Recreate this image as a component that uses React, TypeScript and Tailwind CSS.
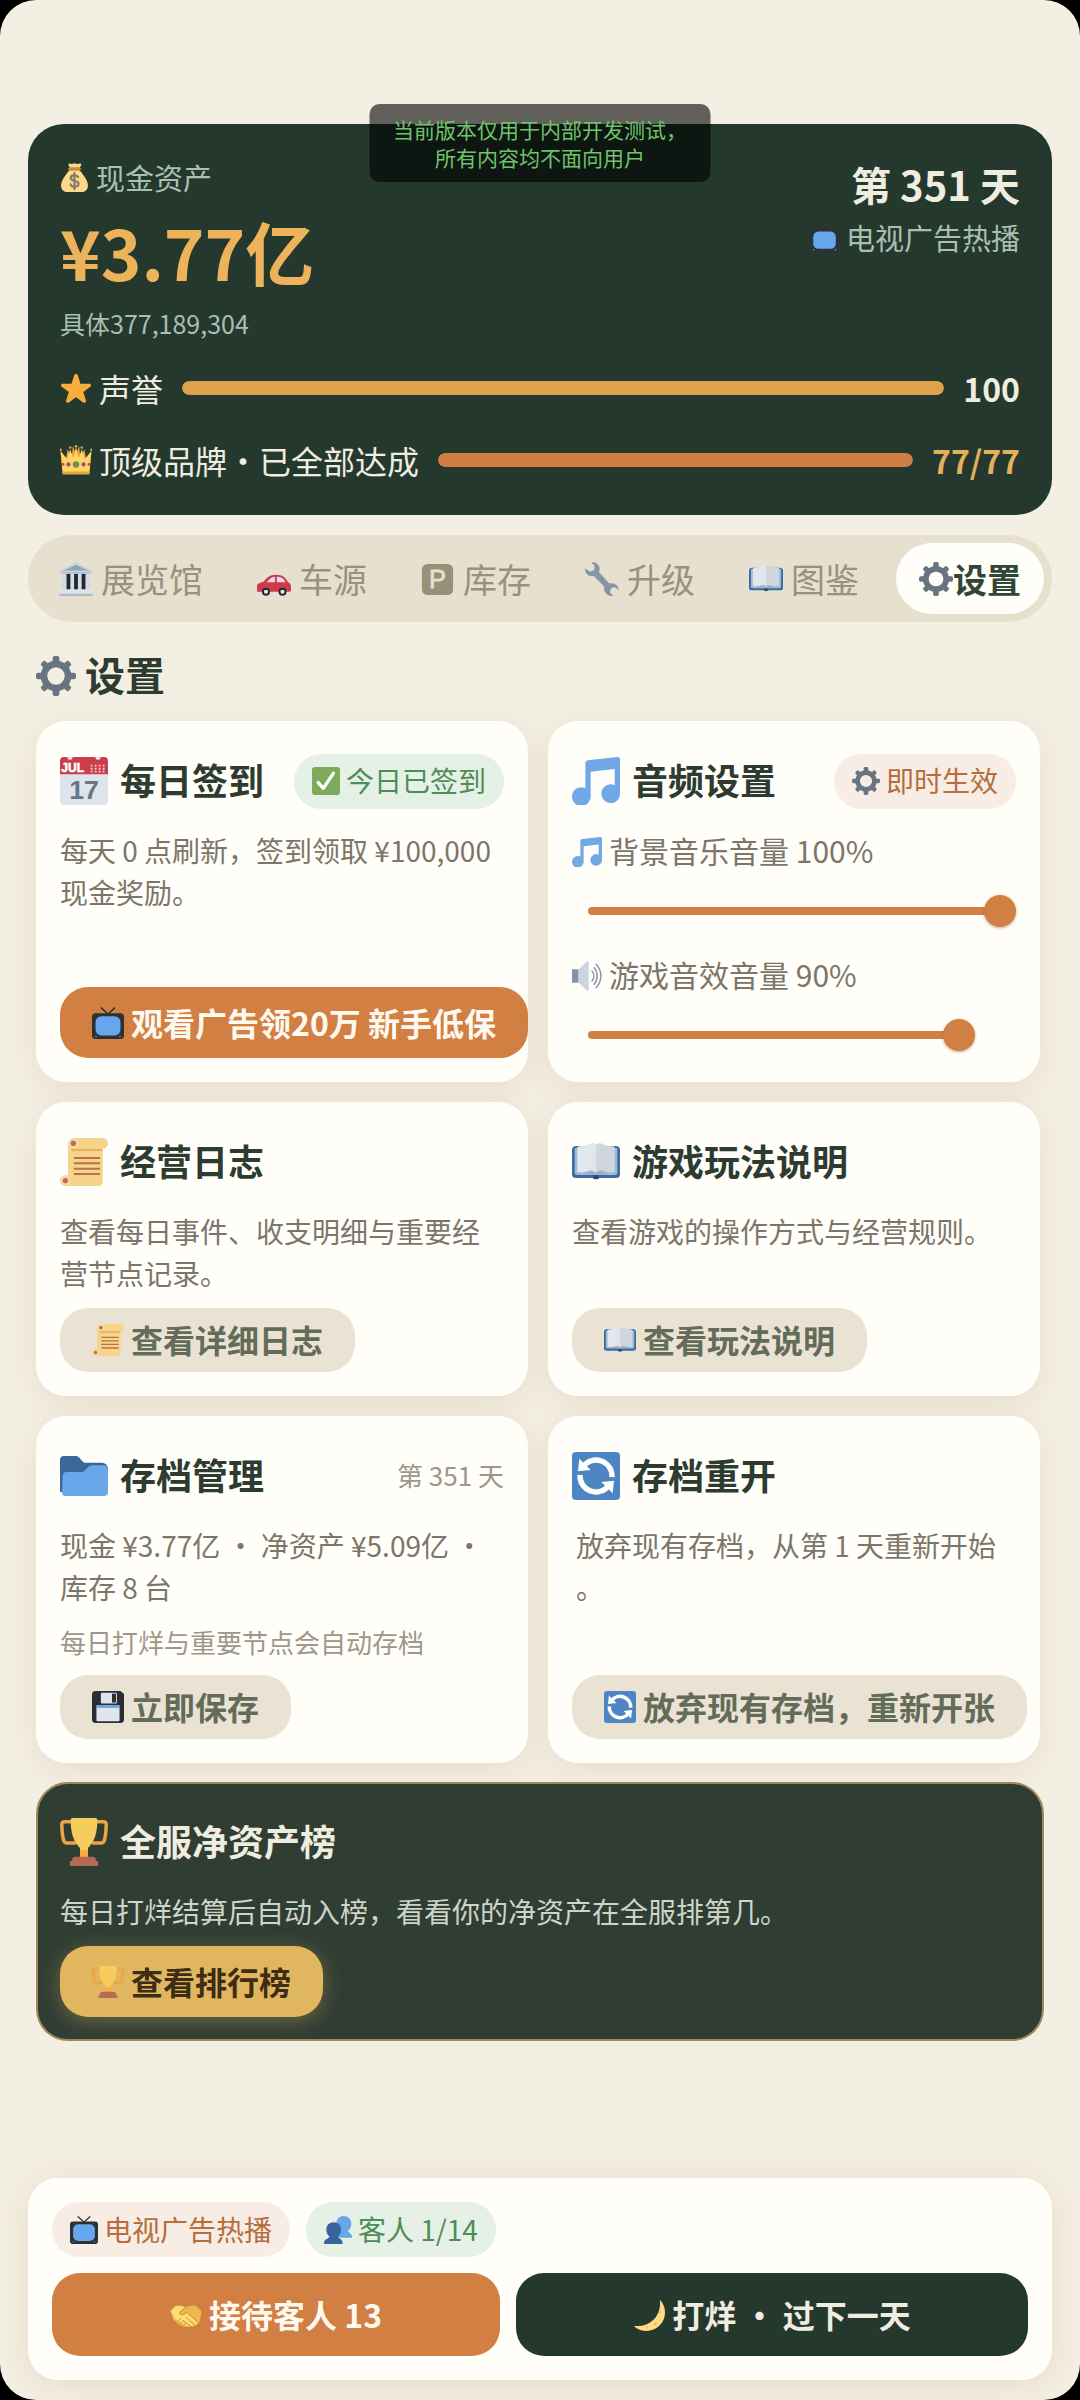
import { useState } from "react";
import type { ReactNode } from "react";
import clsx from "clsx";

interface IconProps {
  className?: string;
}

function Svg({ className, children }: { className?: string; children: ReactNode }) {
  return (
    <svg viewBox="0 0 36 36" className={clsx("block shrink-0", className)} aria-hidden="true">
      {children}
    </svg>
  );
}

function MoneyBagIcon({ className }: IconProps) {
  return (
    <Svg className={className}>
      <path
        fill="#FDD888"
        d="M12 9c-3 3-9 10-10.500 17C.500 32 4 36 9 36h18c5 0 8.500-4 7.500-10C33 19 27 12 24 9z"
      />
      <path fill="#FDD888" d="M11 1c2-1 3 1 4.500 0s3.500-1 5 0S24 0 26 1c1.500.700-.500 3-1.500 5h-12C11.500 4 9.500 1.800 11 1z" />
      <rect x="10" y="5.500" width="16" height="3.500" rx="1.700" fill="#D2893F" />
      <path
        fill="none"
        stroke="#7C7A6C"
        strokeWidth="2.600"
        strokeLinecap="round"
        d="M22.500 17.500c-1-1.800-2.600-2.500-4.600-2.500-2.600 0-4.500 1.300-4.500 3.500 0 5.200 9.600 2 9.600 7.300 0 2.300-2 3.700-4.900 3.700-2.300 0-4.200-1-5-3M18 12.500v20"
      />
    </Svg>
  );
}

function StarIcon({ className }: IconProps) {
  return (
    <Svg className={className}>
      <path
        fill="#F8AD3D"
        d="M27.300 34.600c-.4 0-.8-.1-1.200-.4L18 28.400l-8.100 5.800c-.7.500-1.600.5-2.300 0-.7-.5-1-1.400-.7-2.200l3-9.600-8-5.800c-.7-.5-1-1.400-.8-2.200.3-.8 1-1.300 1.900-1.300h9.900l3.200-9.600c.3-.8 1-1.300 1.900-1.300s1.600.5 1.900 1.300l3.100 9.600h10c.8 0 1.600.5 1.900 1.300.2.800 0 1.700-.8 2.200l-7.900 5.800 3 9.600c.3.800 0 1.700-.7 2.200-.4.300-.8.400-1.200.4z"
      />
    </Svg>
  );
}

function CrownIcon({ className }: IconProps) {
  return (
    <Svg className={className}>
      <path fill="#E9A13B" d="M6 20 8.500 6 13 15l1.500-13 3.500 10 3.500-10L23 15l4.500-9L30 20z" />
      <path fill="#FFD469" d="M3 34 .500 7.500 8 17l3.500-11L15 16l3-13 3 13 3.500-10L28 17l7.500-9.500L33 34z" />
      <path fill="#E9A13B" d="M2.800 31h30.400l-.3 3H3.100z" />
      <circle cx=".9" cy="6.500" r="1.300" fill="#E9A13B" />
      <circle cx="11.500" cy="4" r="1.400" fill="#E9A13B" />
      <circle cx="18" cy="2.500" r="1.500" fill="#E9A13B" />
      <circle cx="24.500" cy="4" r="1.400" fill="#E9A13B" />
      <circle cx="35.100" cy="6.500" r="1.300" fill="#E9A13B" />
      <circle cx="18" cy="23" r="3.600" fill="#6C9444" />
      <circle cx="9.500" cy="23" r="2.400" fill="#9C4692" />
      <circle cx="26.500" cy="23" r="2.400" fill="#9C4692" />
      <circle cx="3.500" cy="23" r="1.500" fill="#C9433F" />
      <circle cx="32.500" cy="23" r="1.500" fill="#C9433F" />
    </Svg>
  );
}

function TvIcon({ className }: IconProps) {
  return (
    <Svg className={className}>
      <path stroke="#2C3136" strokeWidth="1.600" strokeLinecap="round" d="M10.500 1 18 8l7.500-7" fill="none" />
      <rect y="7" width="36" height="29" rx="4" fill="#2C3136" />
      <rect x="4" y="10.500" width="28" height="21.500" rx="6.500" fill="#67A6EC" />
      <circle cx="4.500" cy="33.200" r="1.200" fill="#66757F" />
      <circle cx="31.500" cy="33.200" r="1.200" fill="#66757F" />
    </Svg>
  );
}

function MuseumIcon({ className }: IconProps) {
  return (
    <Svg className={className}>
      <path fill="#C9D4DE" d="M18 0 36 9.500V11H0V9.500z" />
      <path fill="#8FA3B5" d="M18 3 31 9H5z" />
      <rect x="3" y="11" width="30" height="19" fill="#D3DCE5" />
      <path fill="#1F2733" d="M8 12.500h4V29H8zM16 12.500h4V29h-4zM24 12.500h4V29h-4z" />
      <rect x="3" y="10.500" width="30" height="2" fill="#B3C2CF" />
      <path fill="#DDE3E9" d="M3 29h30c2 1 3 3 3 5H0c0-2 1-4 3-5z" />
      <rect y="33.500" width="36" height="2.500" rx="1" fill="#AEBBC8" />
    </Svg>
  );
}

function CarIcon({ className }: IconProps) {
  return (
    <Svg className={className}>
      <path
        fill="#CF3A4A"
        d="M0 31v-5c0-3 2.500-4 7-5 3-4.500 7-7.500 13-7.500 7 0 10.500 3 12.500 7.500 2.500 1 3.500 3 3.500 6v3c0 1-.5 1.500-1.500 1.500H1.500C.5 31.500 0 31.500 0 31z"
      />
      <path fill="#E6DDEB" d="M10.500 21.500c2-3.500 5-5.700 8.500-6v6zM21 15.500c5 0 7.700 2.300 9 6h-9z" />
      <circle cx="9.500" cy="31.500" r="4.300" fill="#24292D" />
      <circle cx="9.500" cy="31.500" r="2.200" fill="#E7ECEF" />
      <circle cx="27" cy="31.500" r="4.300" fill="#24292D" />
      <circle cx="27" cy="31.500" r="2.200" fill="#E7ECEF" />
    </Svg>
  );
}

function ParkingIcon({ className }: IconProps) {
  return (
    <Svg className={className}>
      <rect x="1" y="2" width="33" height="33" rx="6" fill="#999079" />
      <text
        x="17.500"
        y="28"
        textAnchor="middle"
        fontFamily="'Liberation Sans', sans-serif"
        fontSize="27"
        fill="#E8E0CF"
        stroke="#E8E0CF"
        strokeWidth=".8"
      >
        P
      </text>
    </Svg>
  );
}

function WrenchIcon({ className }: IconProps) {
  return (
    <Svg className={className}>
      <path
        fill="#8496A8"
        d="M6.500.500C11-.800 15.500 2.500 15.500 7.500c0 1.500-.2 2.300-.6 3.300l10.800 12c3.800-1 8 .700 9.600 4.200.5 1 .7 2 .7 2.700l-5-3.200-4 1.700-.4 4.300 3.400 3.200c-4 1-8.600-1.300-9.600-5.700-.3-1.500-.2-2.500.1-3.700L9.300 14.900C5.500 15.600 2 13.800.6 10.500.1 9.300 0 8 .1 7l5.400 3.300 4.400-2 .3-4.300z"
      />
    </Svg>
  );
}

function BookIcon({ className }: IconProps) {
  return (
    <Svg className={className}>
      <path
        fill="#3C6C9F"
        d="M3 6h30c2 0 3 1.500 3 3v18.500c0 1.500-1.200 2.500-3 2.500H20.500c-.5 1.300-4.500 1.300-5 0H3c-1.800 0-3-1-3-2.500V9c0-1.500 1-3 3-3z"
      />
      <path fill="#9DB9D8" d="M2 7.500h32V26c0 1-.6 1.700-2 1.700H4c-1.400 0-2-.7-2-1.700z" />
      <path fill="#E2E7ED" d="M4 6.500C7 6 9 6 12 5c2.500-1.300 5-1.500 6 0v21c-2-2-4-2-6-1-3 1-5 1-8 .500z" />
      <path fill="#CFD6DE" d="M32 6.500C29 6 27 6 24 5c-2.500-1.300-5-1.500-6 0v21c2-2 4-2 6-1 3 1 5 1 8 .500z" />
      <path fill="#A3ADB7" d="M10 26.500c3-1.800 6-1.800 8 .5 2-2.300 5-2.300 8-.5-2 .5-6 .8-8 .8s-6-.3-8-.8z" />
      <path fill="#264C78" d="M16 28h4v2c-.8 1-3.200 1-4 0z" />
    </Svg>
  );
}

const gearAngles = [0, 45, 90, 135, 180, 225, 270, 315];

function GearIcon({ className }: IconProps) {
  return (
    <Svg className={className}>
      <circle cx="18" cy="18" r="10.800" fill="none" stroke="#697482" strokeWidth="6" />
      {gearAngles.map((a) => (
        <rect
          key={a}
          x={a % 90 === 0 ? 15 : 15.2}
          y={a % 90 === 0 ? 0 : 0.4}
          width={a % 90 === 0 ? 6 : 5.6}
          height="8"
          rx="1.900"
          fill="#697482"
          transform={`rotate(${a} 18 18)`}
        />
      ))}
    </Svg>
  );
}

function CalendarIcon({ className }: IconProps) {
  return (
    <Svg className={className}>
      <rect width="36" height="36" rx="3" fill="#DDE4EC" />
      <path fill="#CB3F4D" d="M3 0h2.500c.3 3 3.700 3 4 0h17c.3 3 3.700 3 4 0H33c2 0 3 1 3 3v10H0V3c0-2 1-3 3-3z" />
      <g fontFamily="'Liberation Sans', sans-serif" textAnchor="middle">
        <text x="9.500" y="11" fontSize="9" fill="#fff" stroke="#fff" strokeWidth=".4">
          JUL
        </text>
        <text x="18" y="31.500" fontSize="20" fontWeight="700" fill="#677686">
          17
        </text>
      </g>
      <path
        stroke="#F0C9CD"
        strokeWidth="1.400"
        strokeDasharray="1.400 1.600"
        d="M23 6.500h11M23 8.800h11M23 11h11"
      />
    </Svg>
  );
}

function CheckIcon({ className }: IconProps) {
  return (
    <Svg className={className}>
      <rect width="36" height="36" rx="4" fill="#7EAB59" />
      <path
        fill="none"
        stroke="#fff"
        strokeWidth="4.200"
        strokeLinecap="round"
        strokeLinejoin="round"
        d="m8 20 6.500 7.500L27.500 8"
      />
    </Svg>
  );
}

function MusicIcon({ className }: IconProps) {
  return (
    <Svg className={className}>
      <path
        fill="#70A9E6"
        d="M34 0 12 2.500c-1.200.1-2 1-2 2.200v18.700A7 7 0 1 0 14 29.500V11l18-2v12.200A7 7 0 1 0 36 27V2c0-1.200-.8-2.100-2-2z"
      />
    </Svg>
  );
}

function SpeakerIcon({ className }: IconProps) {
  return (
    <Svg className={className}>
      <path fill="#8495A5" d="M1.500 10H8v16H1.500C.5 26 0 25.500 0 24.500v-13C0 10.500.5 10 1.500 10z" />
      <path fill="#CAD5E0" d="M8 10 18 .500c.8-.7 2-.5 2 .800v33.400c0 1.300-1.200 1.500-2 .800L8 26z" />
      <path
        fill="none"
        stroke="#8495A5"
        strokeWidth="1.700"
        strokeLinecap="round"
        d="M24 12c3 3.500 3 8.500 0 12M26.500 8c5 5.500 5 14.500 0 20M29 4c7.500 8 7.500 20 0 28"
      />
    </Svg>
  );
}

function ScrollIcon({ className }: IconProps) {
  return (
    <Svg className={className}>
      <path fill="#F7D489" d="M6 5h26v27c0 2.500-1.500 4-4 4H4a4 4 0 0 1 0-8h2z" />
      <path fill="#E5B162" d="M8.500 8H32v1.800H8.500z" />
      <rect x="6" width="30" height="8" rx="4" fill="#F7D489" />
      <circle cx="10" cy="4" r="3.400" fill="#F3E0BD" />
      <circle cx="10" cy="4" r="2.100" fill="#B8734B" />
      <circle cx="4" cy="32" r="3.400" fill="#F3DDB5" />
      <circle cx="4" cy="32" r="2" fill="#B8734B" />
      <path stroke="#B8734B" strokeWidth="1.500" strokeLinecap="round" d="M11 15h18.500M11 19h18.500M11 23h18.500M11 27h18.500" />
    </Svg>
  );
}

function FolderIcon({ className }: IconProps) {
  return (
    <Svg className={className}>
      <path fill="#3A679A" d="M0 30V6c0-2 1-3 3-3h9c3 0 4 5 7 5h12c3 0 5 2 5 5v17z" />
      <path
        fill="#69A7EA"
        d="M2 18.500C2 16.500 3 15 5 15h11c3.500 0 4.500-5 8-5h8c2.500 0 4 1.500 4 4v16c0 2-1 3-3 3H4c-1.500 0-2.500-1-2.500-2.500z"
      />
    </Svg>
  );
}

function RefreshIcon({ className }: IconProps) {
  return (
    <Svg className={className}>
      <rect width="36" height="36" rx="3" fill="#4E86C3" />
      <g fill="none" stroke="#fff" strokeWidth="4">
        <path d="M8.300 11A12 12 0 0 1 30 18.800" />
        <path d="M27.700 25A12 12 0 0 1 6 17.200" />
      </g>
      <path fill="#fff" d="M5.500 5 4.500 14.500 14 13.500zM30.500 31l1-9.500-9.500 1z" />
    </Svg>
  );
}

function FloppyIcon({ className }: IconProps) {
  return (
    <Svg className={className}>
      <path fill="#2A2F36" d="M4 0h28l4 3.500V32c0 2.500-1.500 4-4 4H4c-2.500 0-4-1.500-4-4V4c0-2.500 1.500-4 4-4z" />
      <rect x="10" y="2" width="18" height="12" rx="1" fill="#DEE4EC" />
      <rect x="22.500" y="3" width="4.500" height="10" fill="#2A2F36" />
      <rect x="5" y="16" width="26" height="18" rx="1" fill="#DFE6EE" />
      <path fill="#68A5E4" d="M5 16h26v3H5z" />
    </Svg>
  );
}

function TrophyIcon({ className }: IconProps) {
  return (
    <Svg className={className}>
      <path
        fill="none"
        stroke="#EBA544"
        strokeWidth="2.600"
        strokeLinejoin="round"
        d="M10 2.800H3.500C2 2.800 1.300 3.700 1.300 5c.2 5 .5 9 1.500 12 .4 1.300 1.400 1.700 2.500 1.700H12M26 2.800h6.500c1.500 0 2.200.9 2.200 2.200-.2 5-.5 9-1.500 12-.4 1.300-1.400 1.700-2.500 1.700H24"
      />
      <path fill="#F6CC5D" d="M9.500 0h17c1 0 1.500.7 1.500 1.500C28 11 26 18 21 22.500V30h-6v-7.500C10 18 8 11 8 1.500 8 .700 8.500 0 9.500 0z" />
      <path fill="#F2AE45" d="M15 24h6v6h-6z" />
      <path fill="#B56A55" d="M12 29h12c2 0 3 1 3 3h.5c.5 0 1 .5 1 1v3h-21v-3c0-.5.500-1 1-1H9c0-2 1-3 3-3z" />
    </Svg>
  );
}

function UsersIcon({ className }: IconProps) {
  return (
    <Svg className={className}>
      <path
        fill="#69A6EA"
        d="M25 0c6 0 10 4 10 10 0 4-1.500 7-4 9 0 3 5 3 5 8v1H16V9c0-5 4-9 9-9z"
      />
      <path
        fill="#37659B"
        d="M12.500 8c5.800 0 9.500 4 9.500 9.500 0 4-1.500 7-4 9 0 3 6 2.500 6 8.500 0 .6-.4 1-1 1H1c-.6 0-1-.4-1-1 0-6 7-5.500 7-8.500-2.500-2-4-5-4-9C3 12 6.700 8 12.500 8z"
      />
    </Svg>
  );
}

function HandshakeIcon({ className }: IconProps) {
  return (
    <Svg className={className}>
      <path
        fill="#EDB94E"
        d="M.500 13 6 8c3-1.500 6-.5 8 0l4 1 6-1.500c3-.5 5 0 7 1.500l4.500 5-2 11c-1 2-3 3-5 4.500-1.500 2-3.500 2-5 1-1.500 1.500-3.500 1.500-5 .5-2 1-4 .3-5-1-2 .3-3.500-.5-4-2-2-.3-3-1.500-3-3-1.500-.5-3-2-3.500-4z"
      />
      <path
        fill="#FFDC75"
        d="m1 13.500 5.500-5c2.500-1 5.500-.3 7.500 0l3 .7-5.500 5c-1.500 2 .500 4.300 3 3.300l4.500-2.500L31 26c.8 2-1 3.500-3 2.300l-5-4.800 3.500 5c0 1.800-1.800 2.500-3.500 1.300l-4-4.500 2 4c-.5 1.500-2.500 1.700-4 .3L5 22z"
      />
      <path
        fill="none"
        stroke="#C98A35"
        strokeWidth="1.100"
        strokeLinecap="round"
        d="m18.500 9-7 5.500c-1.500 2 .500 4.300 3 3.300L19 15l12 11M19 21l7.500 7.500M15 24l6 5.500M8 26l4-4M11 29l3.500-4M14.500 31l3-3.500"
      />
    </Svg>
  );
}

function MoonIcon({ className }: IconProps) {
  return (
    <Svg className={className}>
      <path
        fill="#FFD983"
        d="M30.312.776C32 19 20 32 .776 30.312c8.199 7.717 21.091 7.588 29.107-.429C37.900 21.867 38.030 8.975 30.312.776z"
      />
      <circle cx="30.500" cy="15" r="1.200" fill="#E9B85C" />
      <circle cx="25" cy="28" r="1.600" fill="#E9B85C" />
      <circle cx="16" cy="32" r="1.200" fill="#E9B85C" />
    </Svg>
  );
}

function StatBar({
  icon,
  label,
  value,
  percent,
  fillClass,
  valueClass,
}: {
  icon: ReactNode;
  label: string;
  value: string;
  percent: number;
  fillClass: string;
  valueClass: string;
}) {
  return (
    <div className="flex h-12 items-center gap-[19px] text-[32px]">
      <span className="flex items-center gap-[7px]">
        {icon}
        {label}
      </span>
      <div className="h-[14px] flex-1 overflow-hidden rounded-full bg-white/10">
        <div className={clsx("h-full rounded-full", fillClass)} style={{ width: `${percent}%` }} />
      </div>
      <span className={clsx("font-bold", valueClass)}>{value}</span>
    </div>
  );
}

function Chip({ tone, icon, children }: { tone: "green" | "orange"; icon: ReactNode; children: ReactNode }) {
  return (
    <span
      className={clsx(
        "flex h-[55px] items-center gap-1.5 rounded-full px-[18px] text-[28px] whitespace-nowrap",
        tone === "green" ? "bg-[#e5f0e7] text-[#4f8d57]" : "bg-[#f8ede5] text-[#b56e3c]"
      )}
    >
      {icon}
      <span className="pb-0.5">{children}</span>
    </span>
  );
}

function Card({
  icon,
  title,
  extra,
  children,
}: {
  icon: ReactNode;
  title: string;
  extra?: ReactNode;
  children: ReactNode;
}) {
  return (
    <article className="flex min-w-0 flex-col rounded-[30px] bg-[#fffef8] p-6 shadow-[0_8px_32px_rgba(130,85,35,0.1)]">
      <div className="mb-3 flex h-[72px] items-center justify-between">
        <h3 className="flex items-center gap-3 text-[36px] font-bold whitespace-nowrap text-[#2d3b31]">
          {icon}
          <span className="pb-1">{title}</span>
        </h3>
        {extra}
      </div>
      {children}
    </article>
  );
}

function SoftButton({ icon, children }: { icon: ReactNode; children: ReactNode }) {
  return (
    <button
      type="button"
      className="mt-auto flex h-16 cursor-pointer items-center gap-[7px] self-start rounded-[28px] bg-[#eae3d3] px-8 text-[32px] font-bold whitespace-nowrap text-[#636b59]"
    >
      {icon}
      <span className="pb-0.5">{children}</span>
    </button>
  );
}

function VolumeSlider({
  id,
  icon,
  label,
  value,
  onChange,
}: {
  id: string;
  icon: ReactNode;
  label: string;
  value: number;
  onChange: (value: number) => void;
}) {
  return (
    <div>
      <label htmlFor={id} className="flex h-[45px] items-center gap-[7px] text-[30px] text-[#7c766a]">
        {icon}
        <span className="pb-0.5">
          {label} {value}%
        </span>
      </label>
      <div className="mt-[21px] grid h-8 items-center">
        <div className="mx-4 h-2 [grid-area:1/1]">
          <div className="h-full rounded-full bg-[#d27f43]" style={{ width: `${value}%` }} />
        </div>
        <input
          id={id}
          type="range"
          min="0"
          max="100"
          value={value}
          onChange={(e) => onChange(Number(e.target.value))}
          className="h-8 w-full cursor-pointer appearance-none bg-transparent [grid-area:1/1] [&::-webkit-slider-thumb]:h-8 [&::-webkit-slider-thumb]:w-8 [&::-webkit-slider-thumb]:appearance-none [&::-webkit-slider-thumb]:rounded-full [&::-webkit-slider-thumb]:bg-[#d27f43] [&::-webkit-slider-thumb]:shadow-[0_1px_3px_rgba(150,80,30,0.5)]"
        />
      </div>
    </div>
  );
}

const tabs = [
  { id: "hall", label: "展览馆", Icon: MuseumIcon },
  { id: "source", label: "车源", Icon: CarIcon },
  { id: "stock", label: "库存", Icon: ParkingIcon },
  { id: "upgrade", label: "升级", Icon: WrenchIcon },
  { id: "album", label: "图鉴", Icon: BookIcon },
  { id: "settings", label: "设置", Icon: GearIcon },
];

export default function App() {
  const [activeTab, setActiveTab] = useState("settings");
  const [music, setMusic] = useState(100);
  const [sound, setSound] = useState(90);

  return (
    <div className="bg-black font-['Noto_Sans_CJK_SC',sans-serif]" lang="zh-CN">
      <div className="relative flex min-h-screen flex-col rounded-[36px] bg-[#f4efe3] px-7 pt-[124px] pb-5">
        {/* Internal build notice */}
        <div className="absolute top-[104px] left-1/2 w-[341px] -translate-x-1/2 rounded-[10px] bg-black/60 py-[11px] text-center text-[21px] leading-7 text-[#6fc46a]">
          当前版本仅用于内部开发测试，
          <br />
          所有内容均不面向用户
        </div>

        {/* Player status */}
        <header className="rounded-[36px] bg-[#25382e] px-8 pt-8 pb-[31px] text-[#efece0]">
          <div className="flex justify-between">
            <div>
              <p className="flex items-center gap-[7px] text-[29px] leading-[43px] text-[#a9bfb3]">
                <MoneyBagIcon className="size-[29px]" />
                现金资产
              </p>
              <p className="text-[69px] leading-[105px] font-bold text-[#edb35b]">¥3.77亿</p>
              <p className="text-[25px] leading-[38px] text-[#a9bfb3]">具体377,189,304</p>
            </div>
            <div className="flex flex-col items-end">
              <p className="text-[40px] leading-[57px] font-bold">第 351 天</p>
              <p className="flex items-center gap-[7px] text-[29px] leading-[48px] text-[#a9bfb3]">
                <TvIcon className="size-[29px]" />
                电视广告热播
              </p>
            </div>
          </div>
          <div className="mt-[22px] flex flex-col gap-6">
            <StatBar
              icon={<StarIcon className="size-8" />}
              label="声誉"
              value="100"
              percent={100}
              fillClass="bg-[#dfa34b]"
              valueClass="text-[#efece0]"
            />
            <StatBar
              icon={<CrownIcon className="size-8" />}
              label="顶级品牌・已全部达成"
              value="77/77"
              percent={100}
              fillClass="bg-[#d17e44]"
              valueClass="text-[#e3b05c]"
            />
          </div>
        </header>

        <nav className="mt-5 flex h-[87px] gap-2 rounded-full bg-[#e8e0cf] p-2">
          {tabs.map(({ id, label, Icon }) => {
            const active = id === activeTab;
            return (
              <button
                key={id}
                type="button"
                onClick={() => setActiveTab(id)}
                aria-current={active ? "page" : undefined}
                className={clsx(
                  "flex cursor-pointer items-center rounded-full px-[23px] text-[34px] whitespace-nowrap last:ml-auto",
                  active ? "bg-[#fffef8] font-bold text-[#2f4638]" : "gap-2 text-[#9a917d]"
                )}
              >
                <Icon className="size-[34px]" />
                {label}
              </button>
            );
          })}
        </nav>

        <main className="px-2 pt-6">
          <h2 className="mb-[15px] flex h-[60px] items-center gap-[9px] text-[40px] font-bold text-[#2d3b31]">
            <GearIcon className="size-10" />
            <span className="pb-1">设置</span>
          </h2>

          <div className="grid grid-cols-2 gap-5 pr-1">
            <Card
              icon={<CalendarIcon className="size-12" />}
              title="每日签到"
              extra={
                <Chip tone="green" icon={<CheckIcon className="size-7" />}>
                  今日已签到
                </Chip>
              }
            >
              <p className="text-[28px] leading-[42px] text-[#7c766a]">每天 0 点刷新，签到领取 ¥100,000 现金奖励。</p>
              <button
                type="button"
                className="mt-auto flex h-[71px] cursor-pointer items-center gap-[7px] self-start rounded-[28px] bg-[#d27f43] px-8 text-[32px] font-bold whitespace-nowrap text-[#fffaf0]"
              >
                <TvIcon className="size-8" />
                <span className="pb-0.5">观看广告领20万 新手低保</span>
              </button>
            </Card>

            <Card
              icon={<MusicIcon className="size-12" />}
              title="音频设置"
              extra={
                <Chip tone="orange" icon={<GearIcon className="size-7" />}>
                  即时生效
                </Chip>
              }
            >
              <div className="flex flex-col gap-[26px] pb-[7px]">
                <VolumeSlider
                  id="music-volume"
                  icon={<MusicIcon className="size-[30px]" />}
                  label="背景音乐音量"
                  value={music}
                  onChange={setMusic}
                />
                <VolumeSlider
                  id="sound-volume"
                  icon={<SpeakerIcon className="size-[30px]" />}
                  label="游戏音效音量"
                  value={sound}
                  onChange={setSound}
                />
              </div>
            </Card>

            <Card icon={<ScrollIcon className="size-12" />} title="经营日志">
              <p className="mb-[14px] text-[28px] leading-[42px] text-[#7c766a]">
                查看每日事件、收支明细与重要经营节点记录。
              </p>
              <SoftButton icon={<ScrollIcon className="size-8" />}>查看详细日志</SoftButton>
            </Card>

            <Card icon={<BookIcon className="size-12" />} title="游戏玩法说明">
              <p className="mb-[14px] text-[28px] leading-[42px] text-[#7c766a]">查看游戏的操作方式与经营规则。</p>
              <SoftButton icon={<BookIcon className="size-8" />}>查看玩法说明</SoftButton>
            </Card>

            <Card
              icon={<FolderIcon className="size-12" />}
              title="存档管理"
              extra={<span className="pb-1 text-[26px] text-[#9d968a]">第 351 天</span>}
            >
              <p className="mb-[14px] text-[28px] leading-[42px] text-[#7c766a]">
                现金 ¥3.77亿 ・ 净资产 ¥5.09亿 ・ 库存 8 台
              </p>
              <p className="mb-[14px] text-[26px] leading-[39px] text-[#9d968a]">每日打烊与重要节点会自动存档</p>
              <SoftButton icon={<FloppyIcon className="size-8" />}>立即保存</SoftButton>
            </Card>

            <Card icon={<RefreshIcon className="size-12" />} title="存档重开">
              <p className="px-1 text-[28px] leading-[42px] text-[#7c766a] [line-break:anywhere]">
                放弃现有存档，从第 1 天重新开始。
              </p>
              <SoftButton icon={<RefreshIcon className="size-8" />}>放弃现有存档，重新开张</SoftButton>
            </Card>
          </div>

          {/* Leaderboard */}
          <section className="mt-[19px] rounded-[32px] border-2 border-[#9c8a58] bg-[#303d33] p-[22px]">
            <h3 className="mb-3 flex h-[72px] items-center gap-3 text-[36px] font-bold text-[#efece0]">
              <TrophyIcon className="size-12" />
              <span className="pb-1">全服净资产榜</span>
            </h3>
            <p className="mb-[14px] text-[28px] leading-[42px] text-[#cdd4ca]">
              每日打烊结算后自动入榜，看看你的净资产在全服排第几。
            </p>
            <button
              type="button"
              className="flex h-[71px] cursor-pointer items-center gap-[7px] rounded-[28px] bg-[#e0b65f] px-8 text-[32px] font-bold text-[#3e2c14] shadow-[0_4px_20px_rgba(224,182,95,0.35)]"
            >
              <TrophyIcon className="size-8" />
              <span className="pb-0.5">查看排行榜</span>
            </button>
          </section>
        </main>

        <footer className="mt-auto rounded-[30px] bg-[#fffef8] p-6 shadow-[0_4px_36px_rgba(130,85,35,0.12)]">
          <div className="flex gap-4">
            <Chip tone="orange" icon={<TvIcon className="size-7" />}>
              电视广告热播
            </Chip>
            <Chip tone="green" icon={<UsersIcon className="size-7" />}>
              客人 1/14
            </Chip>
          </div>
          <div className="mt-4 flex gap-4">
            <button
              type="button"
              className="flex h-[83px] flex-[7] cursor-pointer items-center justify-center gap-[7px] rounded-[28px] bg-[#d27f43] text-[32px] font-bold text-[#fffaf0]"
            >
              <HandshakeIcon className="size-8" />
              <span className="pb-0.5">接待客人 13</span>
            </button>
            <button
              type="button"
              className="flex h-[83px] flex-[8] cursor-pointer items-center justify-center gap-[7px] rounded-[28px] bg-[#25382e] text-[32px] font-bold text-[#efece0]"
            >
              <MoonIcon className="size-8" />
              <span className="pb-0.5">打烊 ・ 过下一天</span>
            </button>
          </div>
        </footer>
      </div>
    </div>
  );
}
